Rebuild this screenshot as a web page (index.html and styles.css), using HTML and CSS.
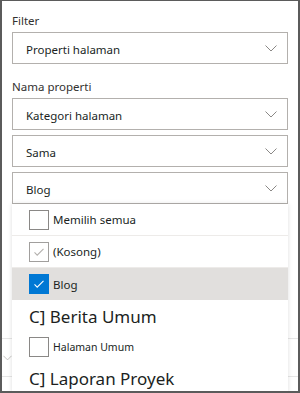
FILE: index.html
```html
<!DOCTYPE html>
<html lang="id">
<head>
  <meta charset="UTF-8" />
  <meta name="viewport" content="width=device-width, initial-scale=1.0"/>
  <title>Filter halaman</title>
  <link rel="stylesheet" href="styles.css">
</head>
<body>
  <div class="frame">
    <div class="pane">
      <label class="field-label">Filter</label>
      <div class="dropdown">
        <span>Properti halaman</span>
        <svg class="chevron" viewBox="0 0 12 7"><path d="M0.5 0.5l5.5 5.5 5.5-5.5"/></svg>
      </div>

      <label class="field-label second">Nama properti</label>
      <div class="dropdown">
        <span>Kategori halaman</span>
        <svg class="chevron" viewBox="0 0 12 7"><path d="M0.5 0.5l5.5 5.5 5.5-5.5"/></svg>
      </div>
      <div class="dropdown">
        <span>Sama</span>
        <svg class="chevron" viewBox="0 0 12 7"><path d="M0.5 0.5l5.5 5.5 5.5-5.5"/></svg>
      </div>

      <div class="dropdown-wrap">
        <div class="dropdown">
          <span>Blog</span>
          <svg class="chevron" viewBox="0 0 12 7"><path d="M0.5 0.5l5.5 5.5 5.5-5.5"/></svg>
        </div>

        <!-- daftar pilihan yang terbuka -->
        <div class="option-list">
          <div class="option sep">
            <span class="check"></span>
            <span class="opt-text">Memilih semua</span>
          </div>
          <div class="option sep">
            <span class="check muted">
              <svg viewBox="0 0 20 20"><path d="M5 10.5l3 3 7-7"/></svg>
            </span>
            <span class="opt-text">(Kosong)</span>
          </div>
          <div class="option selected">
            <span class="check on">
              <svg viewBox="0 0 20 20"><path d="M5 10.5l3 3 7-7"/></svg>
            </span>
            <span class="opt-text">Blog</span>
          </div>
          <div class="option big">C] Berita Umum</div>
          <div class="option small">
            <span class="check"></span>
            <span class="opt-text">Halaman Umum</span>
          </div>
          <div class="option big">C] Laporan Proyek</div>
        </div>
      </div>

      <div class="section-row">
        <svg class="chevron faint" viewBox="0 0 12 7"><path d="M0.5 0.5l5.5 5.5 5.5-5.5"/></svg>
      </div>
    </div>
  </div>
</body>
</html>
```

FILE: styles.css
```css
body {
  margin: 0;
  background: #fff;
  font-family: 'Segoe UI', 'Noto Sans', sans-serif;
  color: #323130;
}

.frame {
  width: 300px;
  height: 393px;
  box-sizing: border-box;
  border: 2px solid #5b5b5b;
  border-top-width: 1px;
  overflow: hidden;
  background: #fff;
}

.pane {
  padding: 12px 10px 0;
}

.field-label {
  display: block;
  font-size: 11.5px;
  line-height: 16px;
  margin-bottom: 3px;
  color: #323130;
}

.field-label.second {
  margin-top: 15px;
}

.dropdown {
  height: 32px;
  box-sizing: border-box;
  border: 1px solid #b3b0ad;
  padding: 3px 10px 0 13px;
  display: flex;
  align-items: center;
  justify-content: space-between;
  font-size: 11.5px;
  color: #201f1e;
  margin-bottom: 5px;
  background: #fff;
}

.chevron {
  width: 12px;
  height: 7px;
  fill: none;
  stroke: #8a8886;
  stroke-width: 1;
  margin-top: -3px;
}

.dropdown-wrap {
  position: relative;
}

.dropdown-wrap .dropdown {
  margin-bottom: 0;
}

.option-list {
  position: absolute;
  top: 100%;
  left: 0;
  right: 0;
  background: #fff;
  box-shadow: 0 0 5px rgba(0, 0, 0, 0.13);
  z-index: 2;
}

.option {
  height: 32px;
  box-sizing: border-box;
  display: flex;
  align-items: center;
  padding-left: 17px;
  font-size: 11.5px;
  color: #201f1e;
}

.option.sep {
  border-bottom: 1px solid #edebe9;
}

.option.selected {
  background: #e1dfdd;
}

.option.big {
  height: 31px;
  font-size: 17px;
  padding-top: 1px;
}

.option.small {
  height: 31px;
}

.option.small .opt-text {
  font-size: 10.5px;
  align-self: flex-end;
  margin-bottom: 8px;
}

.check {
  width: 20px;
  height: 20px;
  box-sizing: border-box;
  border: 1px solid #8a8886;
  margin-right: 4px;
  display: flex;
  align-items: center;
  justify-content: center;
  flex-shrink: 0;
}

.check svg {
  width: 20px;
  height: 20px;
  fill: none;
  stroke-width: 1.2;
}

.check.muted {
  border-color: #a19f9d;
}

.check.muted svg {
  stroke: #b3b0ad;
}

.check.on {
  background: #0078d4;
  border-color: #0078d4;
}

.check.on svg {
  stroke: #fff;
}

.section-row {
  margin: 134px -10px 0;
  height: 39px;
  box-sizing: border-box;
  border-top: 1px solid #e6e6e6;
  border-bottom: 1px solid #e6e6e6;
  display: flex;
  align-items: center;
  padding-left: 1px;
}

.chevron.faint {
  width: 9px;
  height: 6px;
  stroke: #b3b0ad;
  margin-top: 1px;
}
```
